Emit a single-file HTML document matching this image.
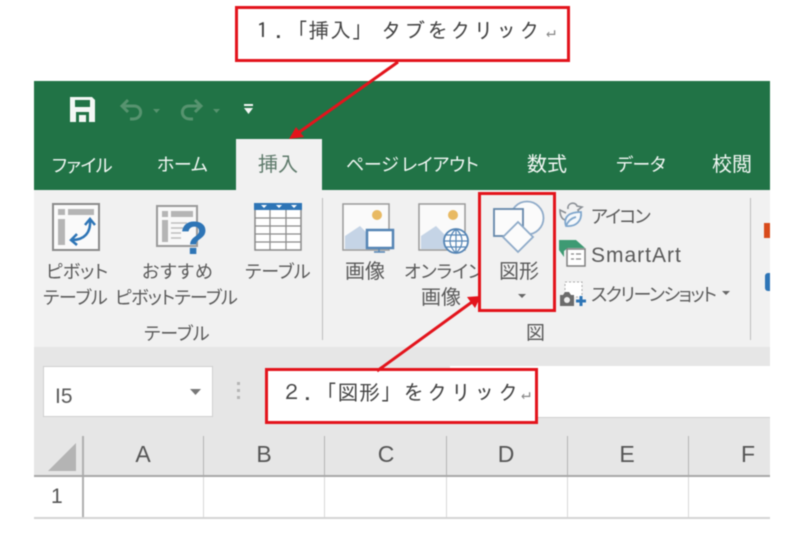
<!DOCTYPE html>
<html lang="ja"><head><meta charset="utf-8"><style>
html,body{margin:0;padding:0;background:#fff}
#p{position:relative;width:800px;height:539px;overflow:hidden;background:#fff;filter:blur(.5px);font-family:"Liberation Sans","Noto Sans CJK JP",sans-serif;font-feature-settings:"palt"}
#p div{position:absolute}
.t{white-space:nowrap;color:#5a5a5a;font-size:18px;line-height:24px}
.w{color:#f2f7f4;font-size:18px}
.c{text-align:center;width:60px;font-size:23px;line-height:28px;color:#555}
.box{border:3px solid #e3141c;background:#fff;box-sizing:border-box}
.cal{white-space:nowrap;font-family:"IPAGothic","Noto Sans CJK JP",monospace;font-size:21px;line-height:24px;color:#444;font-feature-settings:normal}
.ret{color:#888;font-size:16px}
.v{width:1px;background:#bdbdbd}
svg{position:absolute;overflow:visible}
</style></head><body><div id="p">
<div style="left:34px;top:81px;width:736px;height:109px;background:#217346"></div>
<div style="left:34px;top:190px;width:736px;height:157px;background:#f1f1f1"></div>
<div style="left:34px;top:347px;width:736px;height:129px;background:#e6e6e6"></div>
<div style="left:34px;top:476px;width:736px;height:42px;background:#fff"></div>
<div style="left:236px;top:139px;width:86px;height:52px;background:#f1f1f1"></div>

<!-- QAT -->
<svg style="left:70px;top:97px" width="26" height="26" viewBox="0 0 26 26"><path d="M0 0h22l3 3v22H0z" fill="#f4f7f5"/><path d="M5 3h15v7H5z" fill="#217346"/><path d="M6 15h13v10h-3v-7H9v7H6z" fill="#217346"/></svg>
<svg style="left:119px;top:97px" width="104" height="26" viewBox="0 0 104 26" fill="none" stroke="#57936f" stroke-width="3"><path d="M3 9h12c9 0 9 13-1 13h-3"/><path d="M9 3L3 9l6 6"/><path d="M34 12h7l-3.500 4z" fill="#57936f" stroke="none"/><path d="M82 9H70c-9 0-9 13 1 13h3"/><path d="M76 3l6 6-6 6"/><path d="M94 12h7l-3.500 4z" fill="#57936f" stroke="none"/></svg>
<svg style="left:243px;top:103px" width="11" height="12" viewBox="0 0 11 12"><path d="M1 1h9v2H1zM1 5h9L5.500 11z" fill="#f4f7f5"/></svg>

<!-- tabs -->
<div class="t w" style="left:52px;top:154px;letter-spacing:-.6px">ファイル</div>
<div class="t w" style="left:157px;top:153px;letter-spacing:-.4px">ホーム</div>
<div class="t" style="left:258px;top:153px;font-size:20px;color:#5e7a6b">挿入</div>
<div class="t w" style="left:346px;top:153px;letter-spacing:-.3px">ページ<span style="margin-left:3px">レイアウト</span></div>
<div class="t w" style="left:527px;top:153px;font-size:20px">数式</div>
<div class="t w" style="left:616px;top:153px;letter-spacing:-.3px">データ</div>
<div class="t w" style="left:712px;top:153px;font-size:20px">校閲</div>

<!-- Pivot icon -->
<svg style="left:52px;top:203px" width="48" height="48" viewBox="0 0 48 48"><rect x="1" y="1" width="46" height="46" fill="#fafafa" stroke="#8a8a8a" stroke-width="2"/><path d="M6 6h7v6H6zM16 6h26v6H16zM6 16h7v26H6z" fill="#b5b5b5"/><path d="M38 17c1 13-6 20-18 20" fill="none" stroke="#2e75b6" stroke-width="2.500"/><path d="M33 22l5-6 5 6M25 31l-6 6 6 5" fill="none" stroke="#2e75b6" stroke-width="2.500"/></svg>
<!-- Recommended pivot -->
<svg style="left:156px;top:205px" width="50" height="52" viewBox="0 0 50 52"><rect x="1" y="1" width="40" height="40" fill="#f8f8f8" stroke="#9a9a9a" stroke-width="2"/><path d="M6 6h6v6H6zM15 6h22v6H15zM6 15h6v22H6z" fill="#b5b5b5"/><path d="M15 18h16M15 23h12M15 28h10M15 33h10" stroke="#bdbdbd" stroke-width="1.500"/><text x="24" y="49" font-family="Liberation Sans" font-weight="bold" font-size="46" fill="#2e75b6">?</text></svg>
<!-- Table -->
<svg style="left:254px;top:203px" width="48" height="48" viewBox="0 0 48 48"><rect x="1" y="1" width="46" height="46" fill="#fff" stroke="#8a8a8a" stroke-width="1.500"/><rect x="0" y="0" width="48" height="7" fill="#2e75b6"/><path d="M7 2h6l-3 3zM22 2h6l-3 3zM37 2h6l-3 3z" fill="#fff"/><path d="M16 7v40M32 7v40M1 15h46M1 23h46M1 31h46M1 39h46" stroke="#8a8a8a" stroke-width="1.200"/></svg>

<div class="t" style="left:46px;top:260px">ピボット</div>
<div class="t" style="left:43px;top:286px;letter-spacing:-.3px">テーブル</div>
<div class="t" style="left:142px;top:260px;letter-spacing:1px">おすすめ</div>
<div class="t" style="left:115px;top:286px;letter-spacing:-.7px">ピボットテーブル</div>
<div class="t" style="left:245px;top:260px">テーブル</div>
<div class="t" style="left:144px;top:322px">テーブル</div>
<div class="v" style="left:322px;top:198px;height:142px"></div>

<!-- Picture icons -->
<svg style="left:342px;top:203px" width="52" height="52" viewBox="0 0 52 52"><rect x="1" y="1" width="46" height="46" fill="#fafafa" stroke="#9a9a9a" stroke-width="1.500"/><circle cx="35" cy="12" r="5" fill="#e8b962"/><path d="M3 46V33L18 23l12 12v11z" fill="#c5d4e6"/><rect x="25" y="27" width="26" height="18" fill="#fff" stroke="#5585b5" stroke-width="2.500"/><path d="M37 46v3h-5h11" stroke="#5585b5" stroke-width="1.500" fill="none"/></svg>
<svg style="left:418px;top:203px" width="52" height="52" viewBox="0 0 52 52"><rect x="1" y="1" width="46" height="46" fill="#fafafa" stroke="#9a9a9a" stroke-width="1.500"/><circle cx="35" cy="12" r="5" fill="#e8b962"/><path d="M3 46V33L18 23l12 12v11z" fill="#c5d4e6"/><circle cx="38" cy="38" r="12" fill="#fff" stroke="#5585b5" stroke-width="1.800"/><path d="M26 38h24M28 32h20M28 44h20M38 26v24M38 26c-8 7-8 17 0 24M38 26c8 7 8 17 0 24" stroke="#5585b5" stroke-width="1.200" fill="none"/></svg>
<div class="t" style="left:345px;top:260px;font-size:20px">画像</div>
<div class="t" style="left:404px;top:260px;width:74px;overflow:hidden">オンライン</div>
<div class="t" style="left:421px;top:286px;font-size:20px">画像</div>

<!-- Shapes icon -->
<svg style="left:492px;top:200px" width="56" height="56" viewBox="0 0 56 56"><circle cx="35" cy="18" r="16.500" fill="#fbfbfb" stroke="#8fabc9" stroke-width="1.800"/><rect x="2" y="9" width="29" height="27" fill="#fbfbfb" stroke="#6487aa" stroke-width="1.800"/><path d="M26 22l15 15-15 15-15-15z" fill="#fbfbfb" stroke="#8fabc9" stroke-width="1.800"/></svg>
<div class="t" style="left:499px;top:260px;font-size:20px">図形</div>
<svg style="left:518px;top:293px" width="9" height="6" viewBox="0 0 9 6"><path d="M0 1h8L4 5z" fill="#666"/></svg>
<div class="t" style="left:526px;top:322px;font-size:19px">図</div>

<!-- right group -->
<svg style="left:558px;top:201px" width="28" height="28" viewBox="0 0 28 28" fill="none"><path d="M10 8c-1-6 7-8 9-3l5 1-4 3c1 2 0 3-1 4M8 12L2 9c0 6 2 9 5 10" stroke="#8a8f95" stroke-width="1.600"/><path d="M8 25c-3-9 3-14 15-14 1 9-5 15-15 14zM8 25c2-5 6-8 10-9" stroke="#7fa6cc" stroke-width="1.800" fill="#f5f8fb"/></svg>
<svg style="left:559px;top:240px" width="28" height="28" viewBox="0 0 28 28"><path d="M0 0h17l9 8H9l-4 3v6L0 10z" fill="#3e9a73"/><rect x="8" y="9" width="18" height="17" fill="#fff" stroke="#808080" stroke-width="1.500"/><path d="M12 14h3M17 14h5M12 19h3M17 19h5" stroke="#888" stroke-width="1.200"/></svg>
<svg style="left:559px;top:280px" width="28" height="28" viewBox="0 0 28 28"><rect x="6" y="2" width="17" height="15" fill="#fff" stroke="#aaa" stroke-dasharray="2 2"/><path d="M1 15h3l2-3h4l2 3h3v11H1z" fill="#6b6b6b"/><circle cx="8" cy="20" r="3" fill="#eee"/><path d="M17 21h10M22 16v10" stroke="#2e75b6" stroke-width="3"/></svg>
<div class="t" style="left:591px;top:205px;letter-spacing:-1.700px">アイコン</div>
<div class="t" style="left:591px;top:244px;font-size:21px;letter-spacing:1px">SmartArt</div>
<div class="t" style="left:591px;top:283px;letter-spacing:-1.500px">スクリーンショット</div>
<svg style="left:722px;top:290px" width="9" height="6" viewBox="0 0 9 6"><path d="M0 1h8L4 5z" fill="#666"/></svg>
<div class="v" style="left:750px;top:198px;height:142px"></div>
<div style="left:764px;top:223px;width:6px;height:15px;background:#d84a1b"></div>
<div style="left:765px;top:273px;width:5px;height:18px;background:#2e75b6;border-radius:3px 0 0 3px"></div>

<!-- name box / formula -->
<div style="left:43px;top:366px;width:170px;height:51px;background:#fff;box-sizing:border-box;border:1px solid #d0d0d0"></div>
<div class="t" style="left:55px;top:385px;font-size:21px">I5</div>
<svg style="left:190px;top:388px" width="12" height="8" viewBox="0 0 12 8"><path d="M0 1h11L5.500 7z" fill="#777"/></svg>
<svg style="left:237px;top:382px" width="4" height="18" viewBox="0 0 4 18"><path d="M0 0h3v3H0zM0 7h3v3H0zM0 14h3v3H0z" fill="#b5b5b5"/></svg>
<div style="left:450px;top:366px;width:320px;height:51px;background:#fff;border-bottom:1px solid #d0d0d0"></div>

<!-- grid -->
<svg style="left:48px;top:442px" width="30" height="30" viewBox="0 0 30 30"><path d="M0 29L28 1v28z" fill="#b4b4b4"/></svg>
<div class="v" style="left:82px;top:436px;height:83px;width:2px;background:#b0b0b0"></div>
<div class="v" style="left:203px;top:436px;height:40px;background:#b5b5b5"></div>
<div class="v" style="left:324px;top:436px;height:40px;background:#b5b5b5"></div>
<div class="v" style="left:446px;top:436px;height:40px;background:#b5b5b5"></div>
<div class="v" style="left:567px;top:436px;height:40px;background:#b5b5b5"></div>
<div class="v" style="left:688px;top:436px;height:40px;background:#b5b5b5"></div>
<div class="v" style="left:203px;top:476px;height:42px;background:#d8d8d8"></div>
<div class="v" style="left:324px;top:476px;height:42px;background:#d8d8d8"></div>
<div class="v" style="left:446px;top:476px;height:42px;background:#d8d8d8"></div>
<div class="v" style="left:567px;top:476px;height:42px;background:#d8d8d8"></div>
<div class="v" style="left:688px;top:476px;height:42px;background:#d8d8d8"></div>
<div style="left:34px;top:475px;width:736px;height:2px;background:#a8a8a8"></div>
<div style="left:34px;top:517px;width:736px;height:2px;background:#d4d4d4"></div>
<div class="c" style="left:113px;top:440px">A</div>
<div class="c" style="left:234px;top:440px">B</div>
<div class="c" style="left:356px;top:440px">C</div>
<div class="c" style="left:476px;top:440px">D</div>
<div class="c" style="left:597px;top:440px">E</div>
<div class="c" style="left:718px;top:440px">F</div>
<div class="t" style="left:51px;top:485px;font-size:21px;color:#555">1</div>

<!-- callouts -->
<div class="box" style="left:235px;top:6px;width:335px;height:56px"></div>
<div class="cal" style="left:252px;top:19px;letter-spacing:2px">１．</div>
<div class="cal" style="left:287px;top:19px;letter-spacing:.5px">「挿入」</div>
<div class="cal" style="left:381px;top:19px;letter-spacing:2px">タブをクリック</div>
<div class="cal ret" style="left:546px;top:19px">↵</div>
<div class="box" style="left:265px;top:368px;width:273px;height:56px"></div>
<div class="cal" style="left:281px;top:381px;letter-spacing:2px">２．</div>
<div class="cal" style="left:316px;top:381px;letter-spacing:.5px">「図形」</div>
<div class="cal" style="left:403px;top:381px;letter-spacing:2.700px">をクリック</div>
<div class="cal ret" style="left:521px;top:381px">↵</div>
<div style="left:478px;top:192px;width:78px;height:120px;border:3px solid #e3141c;box-sizing:border-box"></div>

<!-- arrows -->
<svg style="left:0;top:0" width="800" height="539" viewBox="0 0 800 539"><path d="M398 62L298 133" stroke="#e3141c" stroke-width="3" fill="none"/><path d="M289 139l7-12 8 10z" fill="#e3141c"/><path d="M377 371L472 302" stroke="#e3141c" stroke-width="3" fill="none"/><path d="M481 296l-6 12-8-11z" fill="#e3141c"/></svg>
</div></body></html>
